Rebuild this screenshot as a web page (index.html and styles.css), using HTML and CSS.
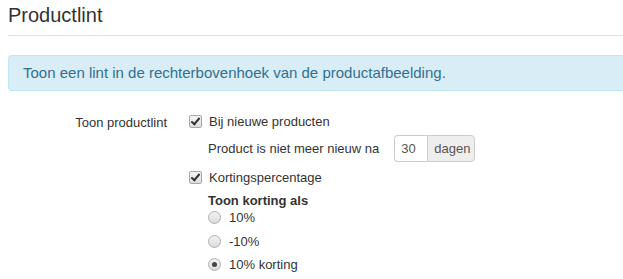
FILE: index.html
```html
<!DOCTYPE html>
<html>
<head>
    <title>Productlint</title>
    <link rel="stylesheet" href="styles.css">
</head>
<body>
    <div class="page">
        <h3 class="page-title">Productlint</h3>

        <div class="alert">Toon een lint in de rechterbovenhoek van de productafbeelding.</div>

        <form class="form-row">
            <label class="row-label">Toon productlint</label>
            <div class="row-controls">
                <label class="check">
                    <input type="checkbox" checked>
                    <span>Bij nieuwe producten</span>
                </label>
                <div class="sub-line">
                    <span>Product is niet meer nieuw na</span>
                    <div class="input-group">
                        <input type="text" class="days" value="30">
                        <span class="addon">dagen</span>
                    </div>
                </div>
                <label class="check">
                    <input type="checkbox" checked>
                    <span>Kortingspercentage</span>
                </label>
                <div class="sub-block">
                    <div class="sub-title">Toon korting als</div>
                    <label class="radio">
                        <input type="radio" name="korting">
                        <span>10%</span>
                    </label>
                    <label class="radio">
                        <input type="radio" name="korting">
                        <span>-10%</span>
                    </label>
                    <label class="radio">
                        <input type="radio" name="korting" checked>
                        <span>10% korting</span>
                    </label>
                </div>
            </div>
        </form>
    </div>
</body>
</html>
```

FILE: styles.css
```css
html, body {
    margin: 0;
    overflow: hidden;
}

body {
    font-family: "Liberation Sans", Arial, sans-serif;
    font-size: 13px;
    color: #333333;
    background-color: #ffffff;
}

.page {
    padding-left: 8px;
}

.page-title {
    font-size: 20px;
    font-weight: normal;
    margin: 0;
    padding: 4px 0 8px 0;
    border-bottom: 1px solid #e0e0e0;
}

/* the box runs on past the right edge of the window */
.alert {
    margin-top: 19px;
    padding: 8px 14px 9px 14px;
    line-height: 17px;
    font-size: 15px;
    background-color: #d9edf7;
    border: 1px solid #bce8f1;
    border-right: none;
    border-radius: 4px 0 0 4px;
    color: #31708f;
}

.form-row {
    display: grid;
    grid-template-columns: 159px 1fr;
    column-gap: 22px;
    margin-top: 21px;
}

.row-label {
    text-align: right;
    padding-top: 3px;
}

.row-controls {
    display: flex;
    flex-direction: column;
}

.check {
    display: flex;
    align-items: center;
    gap: 7px;
    height: 18px;
}

.check input {
    appearance: none;
    margin: 0;
    width: 13px;
    height: 13px;
    border: 1px solid #a9a9a9;
    border-radius: 2px;
    background: linear-gradient(#f4f4f4, #dedede);
    position: relative;
}

.check input:checked::after {
    content: "";
    position: absolute;
    left: 3px;
    top: 0px;
    width: 3px;
    height: 7px;
    border: solid #333;
    border-width: 0 2px 2px 0;
    transform: rotate(40deg);
}

.sub-line {
    display: flex;
    align-items: center;
    gap: 15px;
    padding-left: 19px;
    margin: 5px 0 6px 0;
}

.input-group {
    display: flex;
    height: 27px;
}

.days {
    width: 20px;
    padding: 0 6px;
    margin: 0;
    border: 1px solid #cccccc;
    border-right: none;
    border-radius: 4px 0 0 4px;
    font: inherit;
    color: #555555;
}

.addon {
    display: flex;
    align-items: center;
    padding: 0 4px 0 6px;
    background-color: #eeeeee;
    border: 1px solid #cccccc;
    border-radius: 0 4px 4px 0;
    color: #555555;
}

.sub-block {
    padding-left: 19px;
    margin-top: 8px;
}

.sub-title {
    font-weight: bold;
    height: 12px;
    line-height: 13px;
}

.radio {
    display: flex;
    align-items: center;
    gap: 8px;
    height: 23.5px;
}

.radio input {
    appearance: none;
    margin: 0;
    width: 13px;
    height: 13px;
    border: 1px solid #b0b0b0;
    border-radius: 50%;
    background: linear-gradient(#f2f2f2, #dcdcdc);
    position: relative;
}

.radio input:checked::after {
    content: "";
    position: absolute;
    left: 3px;
    top: 3px;
    width: 5px;
    height: 5px;
    border-radius: 50%;
    background-color: #444;
}
```
